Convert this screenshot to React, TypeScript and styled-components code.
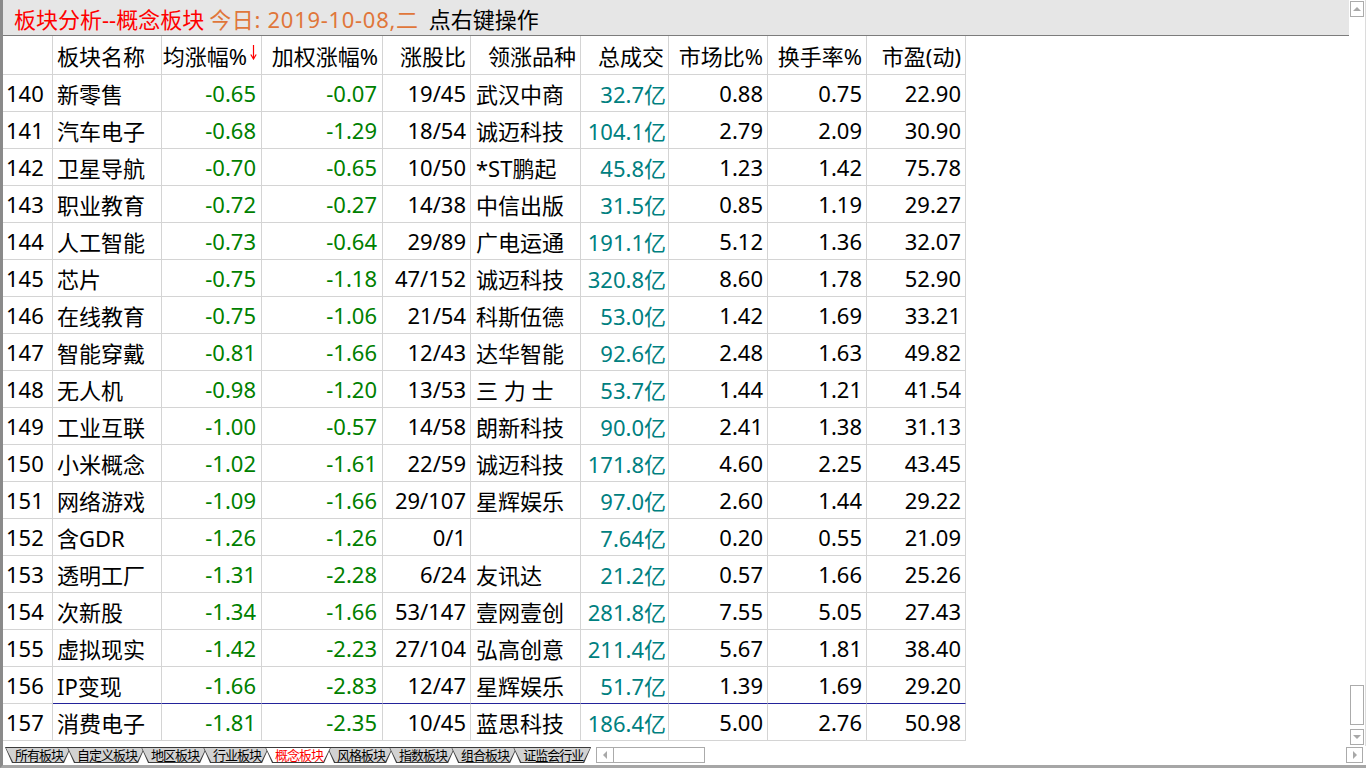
import React from "react";
import styled, { createGlobalStyle } from "styled-components";

const GlobalStyle = createGlobalStyle`
  html, body { margin: 0; padding: 0; background: #ffffff; overflow: hidden; }
  body { font-family: "Noto Sans", "Noto Sans CJK SC", sans-serif; }
`;

const GRID_LINE = "#d4d4d4";

const Window = styled.div`
  width: 1366px;
  height: 768px;
  box-sizing: border-box;
  border-left: 3px solid #8a8a8a;
  border-bottom: 3px solid #a6a6a6;
  display: flex;
  flex-direction: column;
  background: #ffffff;
  font-family: "Noto Sans", "Noto Sans CJK SC", sans-serif;
  overflow: hidden;
`;

const TopArea = styled.div`
  height: 746px;
  display: flex;
`;

const Main = styled.div`
  flex: 1;
  min-width: 0;
  display: flex;
  flex-direction: column;
`;

const TitleBar = styled.div`
  height: 35px;
  border-bottom: 1px solid #7c7c7c;
  background: #e6e6e6;
  display: flex;
  align-items: center;
  padding-left: 11px;
  font-size: 22px;
  white-space: nowrap;
`;

const TitlePart = styled.span<{ $color: string; $gap?: number; $spacing?: number }>`
  color: ${(p) => p.$color};
  margin-left: ${(p) => p.$gap ?? 0}px;
  letter-spacing: ${(p) => p.$spacing ?? 0}px;
`;

const Grid = styled.div`
  display: grid;
  grid-template-columns: 50px 109px 100px 121px 88px 110px 88px 99px 99px 99px;
  grid-template-rows: 39px;
  grid-auto-rows: 37px;
  width: max-content;
`;

const Cell = styled.div<{
  $align?: "left" | "right";
  $color?: string;
  $blue?: boolean;
  $pad?: number;
}>`
  box-sizing: border-box;
  border-right: 1px solid ${GRID_LINE};
  border-bottom: 1px solid ${(p) => (p.$blue ? "#23239a" : GRID_LINE)};
  display: flex;
  align-items: center;
  justify-content: ${(p) => (p.$align === "left" ? "flex-start" : "flex-end")};
  padding: ${(p) =>
    p.$align === "left" ? `0 0 0 ${p.$pad ?? 4}px` : `0 ${p.$pad ?? 4}px 0 0`};
  font-size: 22px;
  color: ${(p) => p.$color ?? "#000000"};
  white-space: pre;
  overflow: hidden;
`;

const SortArrow = styled.svg`
  width: 7px;
  height: 15px;
  margin-left: 3px;
  margin-bottom: 6px;
  flex: none;
`;

const BottomBar = styled.div`
  height: 17px;
  display: flex;
  align-items: flex-start;
  padding-top: 1px;
  box-sizing: border-box;
`;

const BottomGap = styled.div`
  height: 2px;
`;

const TabStrip = styled.div`
  display: flex;
  height: 16px;
  margin-left: 2px;
`;

const Tab = styled.div<{ $active?: boolean }>`
  position: relative;
  height: 16px;
  padding: 0 8px 0 10px;
  margin-left: -4px;
  font-family: "Noto Sans CJK SC", sans-serif;
  font-size: 13px;
  letter-spacing: -1px;
  line-height: 16px;
  color: ${(p) => (p.$active ? "#ff0000" : "#000000")};
  z-index: ${(p) => (p.$active ? 3 : 1)};
  white-space: nowrap;
  background: #3c3c3c;
  clip-path: polygon(0 0, 100% 0, calc(100% - 7px) 100%, 7px 100%);
  &:first-child {
    margin-left: 0;
  }
  &::before {
    content: "";
    position: absolute;
    inset: 1px 1px 1px 1px;
    background: ${(p) => (p.$active ? "#ffffff" : "#d2d2d2")};
    clip-path: polygon(0 0, 100% 0, calc(100% - 7px) 100%, 7px 100%);
    z-index: -1;
  }
  & > span {
    position: relative;
  }
`;

const HScroll = styled.div`
  flex: 1;
  display: flex;
  height: 16px;
  margin-left: 5px;
  margin-right: 3px;
`;

const ScrollBtn = styled.div<{ $w?: number }>`
  width: ${(p) => p.$w ?? 14}px;
  height: 16px;
  box-sizing: border-box;
  border: 1px solid #ababab;
  background: #ffffff;
  display: flex;
  align-items: center;
  justify-content: center;
  flex: none;
`;

const HThumb = styled.div`
  width: 91px;
  height: 16px;
  box-sizing: border-box;
  border: 1px solid #ababab;
  border-left: none;
  flex: none;
`;

const Track = styled.div`
  flex: 1;
`;

const VScroll = styled.div`
  width: 17px;
  box-sizing: border-box;
  border-right: 1px solid #dcdcdc;
  display: flex;
  flex-direction: column;
  padding-left: 1px;
`;

const VThumb = styled.div`
  width: 14px;
  height: 40px;
  box-sizing: border-box;
  border: 1px solid #ababab;
  margin-bottom: 4px;
`;

const Tri = styled.span<{ $dir: "up" | "down" | "left" | "right" }>`
  width: 0;
  height: 0;
  border-style: solid;
  border-color: transparent;
  ${(p) =>
    p.$dir === "up"
      ? "border-width: 0 4px 4px 4px; border-bottom-color: #a8a8a8;"
      : p.$dir === "down"
      ? "border-width: 4px 4px 0 4px; border-top-color: #a8a8a8;"
      : p.$dir === "left"
      ? "border-width: 4px 4px 4px 0; border-right-color: #a8a8a8;"
      : "border-width: 4px 0 4px 4px; border-left-color: #a8a8a8;"}
`;

type Row = [string, string, string, string, string, string, string, string, string, string];

const rows: Row[] = [
  ["140", "新零售", "-0.65", "-0.07", "19/45", "武汉中商", "32.7亿", "0.88", "0.75", "22.90"],
  ["141", "汽车电子", "-0.68", "-1.29", "18/54", "诚迈科技", "104.1亿", "2.79", "2.09", "30.90"],
  ["142", "卫星导航", "-0.70", "-0.65", "10/50", "*ST鹏起", "45.8亿", "1.23", "1.42", "75.78"],
  ["143", "职业教育", "-0.72", "-0.27", "14/38", "中信出版", "31.5亿", "0.85", "1.19", "29.27"],
  ["144", "人工智能", "-0.73", "-0.64", "29/89", "广电运通", "191.1亿", "5.12", "1.36", "32.07"],
  ["145", "芯片", "-0.75", "-1.18", "47/152", "诚迈科技", "320.8亿", "8.60", "1.78", "52.90"],
  ["146", "在线教育", "-0.75", "-1.06", "21/54", "科斯伍德", "53.0亿", "1.42", "1.69", "33.21"],
  ["147", "智能穿戴", "-0.81", "-1.66", "12/43", "达华智能", "92.6亿", "2.48", "1.63", "49.82"],
  ["148", "无人机", "-0.98", "-1.20", "13/53", "三 力 士", "53.7亿", "1.44", "1.21", "41.54"],
  ["149", "工业互联", "-1.00", "-0.57", "14/58", "朗新科技", "90.0亿", "2.41", "1.38", "31.13"],
  ["150", "小米概念", "-1.02", "-1.61", "22/59", "诚迈科技", "171.8亿", "4.60", "2.25", "43.45"],
  ["151", "网络游戏", "-1.09", "-1.66", "29/107", "星辉娱乐", "97.0亿", "2.60", "1.44", "29.22"],
  ["152", "含GDR", "-1.26", "-1.26", "0/1", "", "7.64亿", "0.20", "0.55", "21.09"],
  ["153", "透明工厂", "-1.31", "-2.28", "6/24", "友讯达", "21.2亿", "0.57", "1.66", "25.26"],
  ["154", "次新股", "-1.34", "-1.66", "53/147", "壹网壹创", "281.8亿", "7.55", "5.05", "27.43"],
  ["155", "虚拟现实", "-1.42", "-2.23", "27/104", "弘高创意", "211.4亿", "5.67", "1.81", "38.40"],
  ["156", "IP变现", "-1.66", "-2.83", "12/47", "星辉娱乐", "51.7亿", "1.39", "1.69", "29.20"],
  ["157", "消费电子", "-1.81", "-2.35", "10/45", "蓝思科技", "186.4亿", "5.00", "2.76", "50.98"],
];

const GREEN = "#008000";
const TEAL = "#008080";

const tabs = ["所有板块", "自定义板块", "地区板块", "行业板块", "概念板块", "风格板块", "指数板块", "组合板块", "证监会行业"];

export default function App() {
  return (
    <>
      <GlobalStyle />
      <Window>
        <TopArea>
          <Main>
            <TitleBar>
              <TitlePart $color="#ff0000">板块分析--概念板块</TitlePart>
              <TitlePart $color="#e0763a" $gap={5} $spacing={0.7}>今日: 2019-10-08,二</TitlePart>
              <TitlePart $color="#000000" $gap={10}>点右键操作</TitlePart>
            </TitleBar>
            <Grid>
              <Cell $align="left" $pad={3} />
              <Cell $align="left">板块名称</Cell>
              <Cell>
                均涨幅%
                <SortArrow viewBox="0 0 7 15">
                  <path d="M3.5 0 V13 M0.8 9.5 L3.5 14 L6.2 9.5" stroke="#ff0000" strokeWidth="1.2" fill="none" />
                </SortArrow>
              </Cell>
              <Cell>加权涨幅%</Cell>
              <Cell>涨股比</Cell>
              <Cell>领涨品种</Cell>
              <Cell>总成交</Cell>
              <Cell>市场比%</Cell>
              <Cell>换手率%</Cell>
              <Cell>市盈(动)</Cell>
              {rows.map((r, i) => {
                const blue = i === rows.length - 2;
                return (
                  <React.Fragment key={r[0]}>
                    <Cell $align="left" $pad={3}>{r[0]}</Cell>
                    <Cell $align="left" $blue={blue}>{r[1]}</Cell>
                    <Cell $color={GREEN} $blue={blue} $pad={5}>{r[2]}</Cell>
                    <Cell $color={GREEN} $blue={blue} $pad={5}>{r[3]}</Cell>
                    <Cell $blue={blue}>{r[4]}</Cell>
                    <Cell $align="left" $pad={5} $blue={blue}>{r[5]}</Cell>
                    <Cell $color={TEAL} $blue={blue} $pad={2}>{r[6]}</Cell>
                    <Cell $blue={blue}>{r[7]}</Cell>
                    <Cell $blue={blue}>{r[8]}</Cell>
                    <Cell $blue={blue}>{r[9]}</Cell>
                  </React.Fragment>
                );
              })}
            </Grid>
          </Main>
          <VScroll>
            <ScrollBtn style={{ marginTop: 1 }}>
              <Tri $dir="up" />
            </ScrollBtn>
            <Track />
            <VThumb />
            <ScrollBtn style={{ marginBottom: 1 }}>
              <Tri $dir="down" />
            </ScrollBtn>
          </VScroll>
        </TopArea>
        <BottomBar>
          <TabStrip>
            {tabs.map((t) => (
              <Tab key={t} $active={t === "概念板块"}>
                <span>{t}</span>
              </Tab>
            ))}
          </TabStrip>
          <HScroll>
            <ScrollBtn $w={18}>
              <Tri $dir="left" />
            </ScrollBtn>
            <HThumb />
            <Track />
            <ScrollBtn $w={17}>
              <Tri $dir="right" />
            </ScrollBtn>
          </HScroll>
        </BottomBar>
        <BottomGap />
      </Window>
    </>
  );
}
